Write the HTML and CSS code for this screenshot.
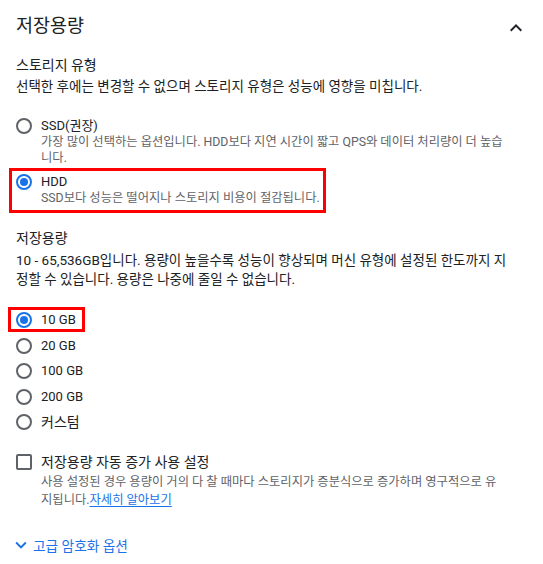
FILE: index.html
```html
<!DOCTYPE html>
<html lang="ko">
<head>
  <meta charset="utf-8">
  <title>저장용량</title>
  <link rel="stylesheet" href="styles.css">
</head>
<body>
  <div class="panel">
    <div class="panel-header">
      <h2 class="panel-title">저장용량</h2>
      <button class="icon-btn" aria-label="접기">
        <svg width="24" height="24" viewBox="0 0 24 24"><path d="M7.41 15.41L12 10.83l4.59 4.58L18 14l-6-6-6 6z"/></svg>
      </button>
    </div>

    <div class="field">
      <div class="field-label">스토리지 유형</div>
      <div class="field-hint">선택한 후에는 변경할 수 없으며 스토리지 유형은 성능에 영향을 미칩니다.</div>
    </div>

    <div class="options type-options">
      <label class="option">
        <span class="radio"></span>
        <span class="option-text">
          <span class="option-label">SSD(권장)</span>
          <span class="option-desc">가장 많이 선택하는 옵션입니다. HDD보다 지연 시간이 짧고 QPS와 데이터 처리량이 더 높습니다.</span>
        </span>
      </label>
      <label class="option marked marked-hdd">
        <span class="radio checked"></span>
        <span class="option-text">
          <span class="option-label">HDD</span>
          <span class="option-desc">SSD보다 성능은 떨어지나 스토리지 비용이 절감됩니다.</span>
        </span>
      </label>
    </div>

    <div class="field field-size">
      <div class="field-label">저장용량</div>
      <div class="field-hint">10 - 65,536GB입니다. 용량이 높을수록 성능이 향상되며 머신 유형에 설정된 한도까지 지정할 수 있습니다. 용량은 나중에 줄일 수 없습니다.</div>
    </div>

    <div class="options size-options">
      <label class="option size marked marked-size"><span class="radio checked"></span><span class="option-label">10 GB</span></label>
      <label class="option size"><span class="radio"></span><span class="option-label">20 GB</span></label>
      <label class="option size"><span class="radio"></span><span class="option-label">100 GB</span></label>
      <label class="option size"><span class="radio"></span><span class="option-label">200 GB</span></label>
      <label class="option size"><span class="radio"></span><span class="option-label ko">커스텀</span></label>
    </div>

    <label class="option auto-grow">
      <span class="checkbox"></span>
      <span class="option-text">
        <span class="option-label ko">저장용량 자동 증가 사용 설정</span>
        <span class="option-desc grow-desc">사용 설정된 경우 용량이 거의 다 찰 때마다 스토리지가 증분식으로 증가하며 영구적으로 유지됩니다.<a class="link" href="#">자세히 알아보기</a></span>
      </span>
    </label>

    <a class="advanced" href="#">
      <svg width="22" height="22" viewBox="0 0 24 24"><path d="M16.59 8.59L12 13.17 7.41 8.59 6 10l6 6 6-6z"/></svg>
      <span>고급 암호화 옵션</span>
    </a>
  </div>
</body>
</html>
```

FILE: styles.css
```css
body {
    margin: 0;
    background-color: #fff;
    color: #202124;
    font-family: Roboto, "Noto Sans CJK KR", sans-serif;
}

.panel {
    padding: 0 36px 0 16px;
}

.panel-header {
    display: flex;
    align-items: center;
    justify-content: space-between;
    height: 24px;
    margin-top: 14px;
    margin-right: -21px;
}

.panel-title {
    margin: 0;
    font-size: 18.5px;
    font-weight: 400;
    line-height: 24px;
}

.icon-btn {
    border: 0;
    padding: 0;
    margin-top: 3px;
    background: none;
    width: 24px;
    height: 24px;
}

.icon-btn svg {
    display: block;
    fill: #202124;
}

.field {
    margin-top: 18px;
}

.field-label {
    font-size: 14px;
    line-height: 18px;
}

.field-hint {
    margin-top: 3px;
    font-size: 13.5px;
    line-height: 19px;
}

.options {
    display: flex;
    flex-direction: column;
}

.type-options {
    margin-top: 22px;
    gap: 8px;
}

.option {
    display: flex;
    align-items: flex-start;
    gap: 9px;
    width: fit-content;
}

.option-text {
    display: flex;
    flex-direction: column;
}

.option-label {
    font-size: 13px;
    line-height: 16px;
}

.option-label.ko {
    font-size: 14px;
}

.option-desc {
    color: #5f6368;
    font-size: 12.3px;
    line-height: 16px;
}

.radio {
    flex: none;
    box-sizing: border-box;
    width: 16px;
    height: 16px;
    border: 2px solid #5f6368;
    border-radius: 50%;
    display: flex;
    align-items: center;
    justify-content: center;
}

.radio.checked {
    border-color: #1a73e8;
}

.radio.checked::before {
    content: "";
    width: 8px;
    height: 8px;
    border-radius: 50%;
    background: #1a73e8;
}

.checkbox {
    flex: none;
    box-sizing: border-box;
    width: 16px;
    height: 16px;
    border: 2px solid #5f6368;
    border-radius: 2px;
}

/* red annotation boxes */
.marked {
    position: relative;
}

.marked::after {
    content: "";
    position: absolute;
    border: 3px solid #f00;
}

.marked-hdd::after {
    inset: -6px -6px -7px -7px;
}

.marked-size::after {
    inset: -3px -9px -2px -8px;
}

.field-size {
    margin-top: 23px;
}

.field-size .field-hint {
    margin-top: 4px;
}

.size-options {
    margin-top: 21px;
    gap: 5.5px;
}

.option.size {
    align-items: center;
    height: 20px;
}

.auto-grow {
    margin-top: 22px;
}

.auto-grow .option-label {
    margin-bottom: 3px;
}

.grow-desc {
    line-height: 18px;
}

.link {
    color: #1a73e8;
    text-decoration: underline;
    text-underline-offset: 2px;
}

.advanced {
    display: flex;
    align-items: center;
    margin: 25px 0 0 -6px;
    height: 22px;
    gap: 1px;
    color: #1a73e8;
    text-decoration: none;
    font-size: 13.7px;
}

.advanced svg {
    fill: #1a73e8;
}
```
